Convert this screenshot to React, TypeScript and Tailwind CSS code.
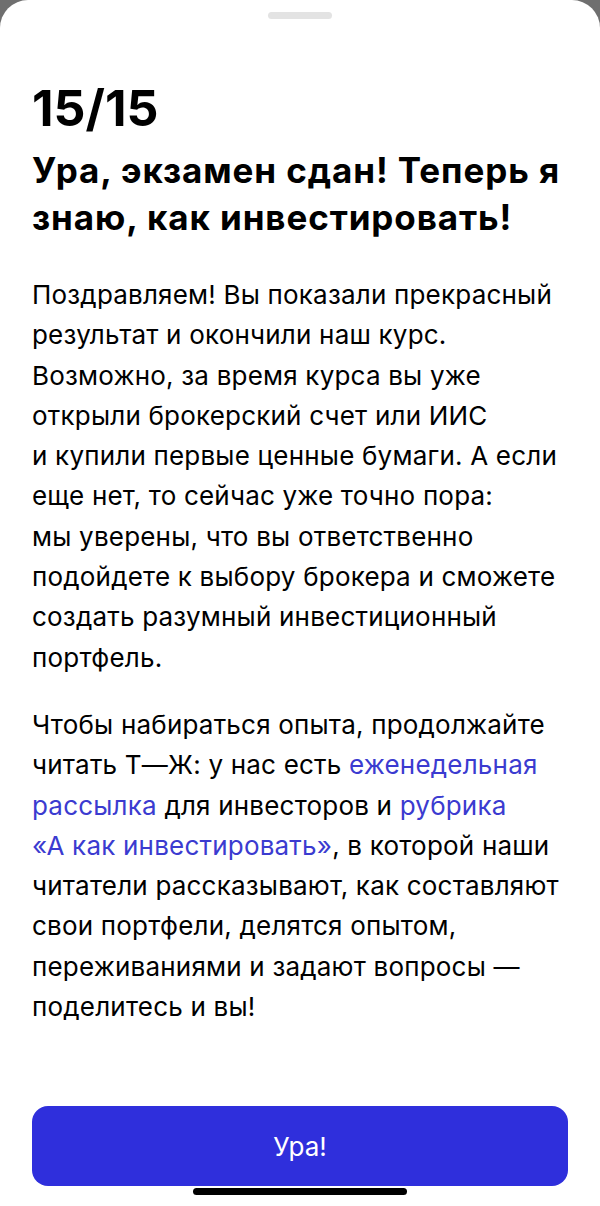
const Line = ({ children }: { children: React.ReactNode }) => (
  <span className="block whitespace-nowrap">{children}</span>
);

const Link = ({ children }: { children: React.ReactNode }) => (
  <span className="text-[#3b3bd0]">{children}</span>
);

export default function App() {
  return (
    <div
      className="h-[1206px] w-[600px] overflow-hidden bg-[#6f6f6f]"
      style={{ fontFamily: 'Inter, "Liberation Sans", sans-serif' }}
    >
      <div className="relative flex h-full flex-col rounded-t-[28px] bg-white">
        {/* grabber */}
        <div className="flex justify-center pt-[12px]">
          <div className="h-[7px] w-[64px] rounded-full bg-[#e3e3e3]" />
        </div>

        <div className="flex flex-col px-8 pt-[61px]">
          <h1 className="text-[50px] font-bold leading-[56px] tracking-[0px] text-black">15/15</h1>
          <h2 className="mt-[11px] text-[35px] font-bold leading-[47px] tracking-[0.9px] text-black">
            <Line>Ура, экзамен сдан! Теперь я</Line>
            <Line>знаю, как инвестировать!</Line>
          </h2>

          <p className="mt-[34px] text-[26px] leading-[40.3px] tracking-[0.2px] text-black">
            <Line>Поздравляем! Вы показали прекрасный</Line>
            <Line>результат и окончили наш курс.</Line>
            <Line>Возможно, за время курса вы уже</Line>
            <Line>открыли брокерский счет или ИИС</Line>
            <Line>и купили первые ценные бумаги. А если</Line>
            <Line>еще нет, то сейчас уже точно пора:</Line>
            <Line>мы уверены, что вы ответственно</Line>
            <Line>подойдете к выбору брокера и сможете</Line>
            <Line>создать разумный инвестиционный</Line>
            <Line>портфель.</Line>
          </p>

          <p className="mt-[27px] text-[26px] leading-[40.3px] tracking-[0.2px] text-black">
            <Line>Чтобы набираться опыта, продолжайте</Line>
            <Line>
              читать Т—Ж: у нас есть <Link>еженедельная</Link>
            </Line>
            <Line>
              <Link>рассылка</Link> для инвесторов и <Link>рубрика</Link>
            </Line>
            <Line>
              <Link>«А как инвестировать»</Link>, в которой наши
            </Line>
            <Line>читатели рассказывают, как составляют</Line>
            <Line>свои портфели, делятся опытом,</Line>
            <Line>переживаниями и задают вопросы —</Line>
            <Line>поделитесь и вы!</Line>
          </p>
        </div>

        <div className="mt-auto px-8 pb-[20px]">
          <button className="flex h-[80px] w-full items-center justify-center rounded-[16px] bg-[#2f2fdc] text-[26px] text-white">
            Ура!
          </button>
        </div>

        {/* home indicator */}
        <div className="absolute bottom-[11px] left-1/2 h-[7px] w-[214px] -translate-x-1/2 rounded-full bg-black" />
      </div>
    </div>
  );
}
